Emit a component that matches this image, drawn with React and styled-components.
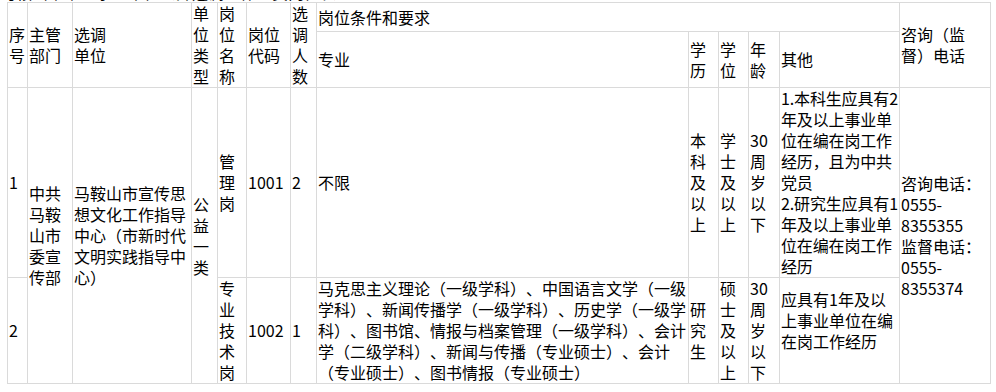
import React from "react";
import styled, { createGlobalStyle, css } from "styled-components";

const GlobalStyle = createGlobalStyle`
  html, body {
    margin: 0;
    padding: 0;
    background: #fff;
  }
  body {
    font-family: "Noto Sans CJK SC", "Noto Sans", sans-serif;
    font-size: 16px;
    line-height: 21px;
    color: #000;
    text-spacing-trim: space-all;
  }
`;

const columns = [20, 45, 119, 26, 29, 44, 26, 372, 30, 30, 31, 120, 91];

const Page = styled.div`
  height: 392px;
  padding-left: 7px;
  overflow: hidden;
`;

const Caption = styled.div`
  height: 20px;
  margin: -18px 0 0 -7px;
  white-space: nowrap;
`;

const Table = styled.table`
  width: 984px;
  border-collapse: collapse;
  table-layout: fixed;
`;

const Col = styled.col`
  width: ${({ $w }) => $w}px;
`;

const cellBase = css`
  border: 1px solid #dadada;
  padding: 0 0 0 1px;
  vertical-align: middle;
  text-align: left;
  font-weight: normal;
`;

const HeadCell = styled.th`
  ${cellBase};
`;

const Cell = styled.td`
  ${cellBase};
  padding-bottom: ${({ $gapBelow }) => ($gapBelow ? "21px" : "0")};
  letter-spacing: ${({ $tight }) => ($tight ? "-0.15px" : "normal")};
`;

const GroupRow = styled.tr`
  height: 29px;
`;

const SubRow = styled.tr`
  height: 55px;
`;

const App = () => {
  return (
    <Page>
      <GlobalStyle />
      <Caption>马鞍山市市直事业单位公开选调工作人员岗位表</Caption>
      <Table>
        <colgroup>
          {columns.map((w, i) => (
            <Col key={i} $w={w} />
          ))}
        </colgroup>
        <thead>
          <GroupRow>
            <HeadCell rowSpan={2}>序号</HeadCell>
            <HeadCell rowSpan={2}>主管部门</HeadCell>
            <HeadCell rowSpan={2}>
              选调
              <br />
              单位
            </HeadCell>
            <HeadCell rowSpan={2}>单位类型</HeadCell>
            <HeadCell rowSpan={2}>岗位名称</HeadCell>
            <HeadCell rowSpan={2}>岗位代码</HeadCell>
            <HeadCell rowSpan={2}>选调人数</HeadCell>
            <HeadCell colSpan={5}>岗位条件和要求</HeadCell>
            <HeadCell rowSpan={2}>咨询（监督）电话</HeadCell>
          </GroupRow>
          <SubRow>
            <HeadCell>专业</HeadCell>
            <HeadCell>学历</HeadCell>
            <HeadCell>学位</HeadCell>
            <HeadCell>年龄</HeadCell>
            <HeadCell>其他</HeadCell>
          </SubRow>
        </thead>
        <tbody>
          <tr>
            <Cell>1</Cell>
            <Cell rowSpan={2}>中共马鞍山市委宣传部</Cell>
            <Cell rowSpan={2}>
              马鞍山市宣传思想文化工作指导中心（市新时代文明实践指导中心）
            </Cell>
            <Cell rowSpan={2}>公益一类</Cell>
            <Cell>管理岗</Cell>
            <Cell>1001</Cell>
            <Cell>2</Cell>
            <Cell>不限</Cell>
            <Cell>本科及以上</Cell>
            <Cell>学士及以上</Cell>
            <Cell>30周岁以下</Cell>
            <Cell $tight>
              1.本科生应具有2年及以上事业单位在编在岗工作经历，且为中共党员
              <br />
              2.研究生应具有1年及以上事业单位在编在岗工作经历
            </Cell>
            <Cell rowSpan={2}>
              咨询电话：0555-8355355
              <br />
              监督电话：0555-8355374
            </Cell>
          </tr>
          <tr>
            <Cell>2</Cell>
            <Cell>专业技术岗</Cell>
            <Cell>1002</Cell>
            <Cell>1</Cell>
            <Cell>
              马克思主义理论（一级学科）、中国语言文学（一级学科）、新闻传播学（一级学科）、历史学（一级学科）、图书馆、情报与档案管理（一级学科）、会计学（二级学科）、新闻与传播（专业硕士）、会计（专业硕士）、图书情报（专业硕士）
            </Cell>
            <Cell>研究生</Cell>
            <Cell>硕士及以上</Cell>
            <Cell>30周岁以下</Cell>
            <Cell $gapBelow>应具有1年及以上事业单位在编在岗工作经历</Cell>
          </tr>
        </tbody>
      </Table>
    </Page>
  );
};

export default App;
